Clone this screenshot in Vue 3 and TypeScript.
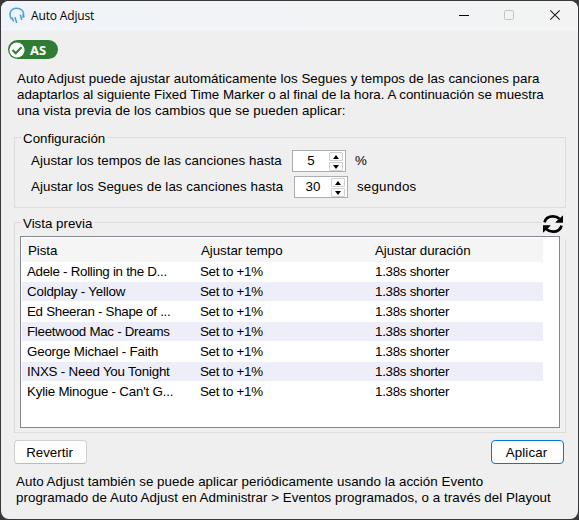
<script setup lang="ts">
import { ref } from 'vue';

interface TrackRow {
  track: string;
  tempo: string;
  duration: string;
  fit: string;
}

const tempoLimit = ref(5);
const segueLimit = ref(30);

const rows: TrackRow[] = [
  ['Adele - Rolling in the D...', 'tight'],
  ['Coldplay - Yellow', 'snug'],
  ['Ed Sheeran - Shape of ...', 'tight'],
  ['Fleetwood Mac - Dreams', 'tight'],
  ['George Michael - Faith', 'snug'],
  ['INXS - Need You Tonight', 'snug'],
  ["Kylie Minogue - Can't G...", 'snug'],
].map(([track, fit]) => ({ track, fit, tempo: 'Set to +1%', duration: '1.38s shorter' }));
</script>

<template>
  <div class="desktop">
    <main class="window">
      <header class="titlebar">
        <svg class="app-icon" width="16" height="17" viewBox="0 0 16 17">
          <path
            d="M2.6 12.3C-.2 8.500.6 1.300 7.600 1.200c6.200 0 8.200 5.200 6.200 9.300"
            fill="none"
            stroke="#4ba3dc"
            stroke-width="1.6"
          />
          <path
            d="M3 10.500l1.600 4M6 10.300l1.700 5.800M11.300 7.800l1.500 5.200M13.800 7.300l1.200 3.200"
            fill="none"
            stroke="#4ba3dc"
            stroke-width="1.6"
          />
        </svg>
        <span class="title">Auto Adjust</span>
        <svg class="controls" width="102" height="12" viewBox="0 0 102 12">
          <path d="M0 6.5h10" stroke="#000" />
          <rect x="45.5" y="1.5" width="9" height="9" rx="1" fill="none" stroke="#c3c3c3" />
          <path d="M91.3 1.3l9.4 9.4M100.7 1.3l-9.4 9.4" stroke="#1a1a1a" stroke-width="1.1" />
        </svg>
      </header>

      <div class="badge">
        <svg width="16" height="16" viewBox="0 0 16 16">
          <circle cx="8" cy="8" r="7.6" fill="#fff" />
          <path d="M3.5 8l3.2 3.2 5.8-6" fill="none" stroke="#2e7d32" stroke-width="2" />
        </svg>
        <b>AS</b>
      </div>

      <p class="intro">
        <span class="i1">Auto Adjust puede ajustar automáticamente los Segues y tempos de las canciones para</span>
        <span class="i2">adaptarlos al siguiente Fixed Time Marker o al final de la hora. A continuación se muestra</span>
        <span class="i3">una vista previa de los cambios que se pueden aplicar:</span>
      </p>

      <fieldset class="config">
        <legend>Configuración</legend>
        <div class="setting">
          <label>Ajustar los tempos de las canciones hasta</label>
          <div class="spinner">
            <span>{{ tempoLimit }}</span>
            <div class="arrows">
              <button class="up" @click="tempoLimit++"></button>
              <button class="down" @click="tempoLimit--"></button>
            </div>
          </div>
          <span>%</span>
        </div>
        <div class="setting second">
          <label>Ajustar los Segues de las canciones hasta</label>
          <div class="spinner">
            <span>{{ segueLimit }}</span>
            <div class="arrows">
              <button class="up" @click="segueLimit++"></button>
              <button class="down" @click="segueLimit--"></button>
            </div>
          </div>
          <span class="unit">segundos</span>
        </div>
      </fieldset>

      <fieldset class="preview">
        <legend>Vista previa</legend>
        <div class="refresh">
          <svg width="20" height="20" viewBox="0 0 20 20">
            <path
              d="M1.5 8.4C2.5 4 6 2.3 10 2.3c2.8 0 4.8.8 6.400 2.400M18.500 11.600c-1 4.400-4.500 6.100-8.500 6.100-2.800 0-4.800-.8-6.400-2.400"
              fill="none"
              stroke="#000"
              stroke-width="2.7"
            />
            <path d="M20 1.500v7h-7.300zM0 18.500v-7h7.300z" />
            <path d="M20 1.500v7h-7.800zM0 18.500v-7h7.800z" />
          </svg>
        </div>
        <div class="list">
          <div class="row head">
            <span>Pista</span>
            <span>Ajustar tempo</span>
            <span>Ajustar duración</span>
          </div>
          <div v-for="row in rows" :key="row.track" class="row">
            <span :class="row.fit">{{ row.track }}</span>
            <span class="tight">{{ row.tempo }}</span>
            <span class="tight">{{ row.duration }}</span>
          </div>
        </div>
      </fieldset>

      <div class="actions">
        <button class="btn">Revertir</button>
        <button class="btn primary">Aplicar</button>
      </div>

      <p class="footer">
        <span class="f1">Auto Adjust también se puede aplicar periódicamente usando la acción Evento</span>
        <span class="f2">programado de Auto Adjust en Administrar &gt; Eventos programados, o a través del Playout</span>
      </p>
    </main>
  </div>
</template>

<style>
body {
  background: #2d2c2e;
}
</style>

<style scoped>
.desktop {
  width: 579px;
  height: 520px;
  box-sizing: border-box;
  padding: 1px;
  background: #38373a;
  overflow: hidden;
}

.window {
  height: 518px;
  border-radius: 8px;
  background: #efefef;
  overflow: hidden;
  font: 13.33px/16px 'Liberation Sans', Arial, sans-serif;
  color: #000;
  white-space: nowrap;
}

.titlebar {
  display: flex;
  align-items: center;
  height: 30px;
  box-sizing: border-box;
  padding: 0 17px 2px 8px;
  background: linear-gradient(to right, #f0f3f9, #f3f3f3);
}

.title {
  margin-left: 6px;
  font: 12px/16px 'Open Sans', sans-serif;
  letter-spacing: -0.15px;
  margin-top: 1px;
}

.controls {
  margin-left: auto;
}

.badge {
  display: flex;
  align-items: center;
  width: 50px;
  height: 19px;
  box-sizing: border-box;
  margin: 9px 0 0 7px;
  padding-left: 1px;
  border-radius: 10px;
  background: #2e7d32;
  color: #fff;
}

.badge b {
  margin-left: 5px;
  font-family: 'Noto Sans', sans-serif;
  font-size: 13px;
}

p {
  margin: 0;
}

p span {
  display: block;
}

.intro {
  padding: 12px 0 0 16px;
}

.i1,
.f1,
.f2,
label {
  letter-spacing: 0.046px;
}

.i3 {
  letter-spacing: 0.075px;
}

fieldset {
  position: relative;
  width: 552px;
  box-sizing: border-box;
  margin: 0 0 0 13px;
  padding: 0;
  border: 1px solid #dcdcdc;
}

legend {
  margin-left: 6px;
  padding: 0 2px;
  height: 15px;
  line-height: 17px;
}

.config {
  height: 78px;
  margin-top: 11px;
}

.setting {
  display: flex;
  align-items: center;
  height: 22px;
  margin: 5px 0 0 16px;
}

.setting.second {
  margin-top: 4px;
}

.setting label {
  width: 261px;
}

.setting.second label {
  width: 263px;
}

.spinner {
  display: flex;
  width: 54px;
  height: 22px;
  box-sizing: border-box;
  margin-right: 9px;
  border: 1px solid #abadb3;
  background: #fff;
}

.spinner > span {
  width: 36px;
  line-height: 20px;
  text-align: center;
}

.unit {
  letter-spacing: 0.2px;
}

.arrows {
  display: flex;
  flex-direction: column;
  gap: 1px;
  width: 15px;
  height: 19px;
  padding-top: 1px;
}

.arrows button {
  display: flex;
  align-items: center;
  justify-content: center;
  width: 14px;
  height: 9px;
  box-sizing: border-box;
  padding: 0;
  border: 1px solid #d0d0d0;
  border-radius: 1px;
  background: #fdfdfd;
}

.arrows button::before {
  content: '';
  border: 3px solid transparent;
}

.arrows .up::before {
  border-top: 0;
  border-bottom: 4px solid #000;
}

.arrows .down::before {
  border-bottom: 0;
  border-top: 4px solid #000;
}

.preview {
  height: 218px;
  margin-top: 7px;
}

/* sits on the corner of the group frame and hides it */
.refresh {
  position: absolute;
  top: -16px;
  right: -1px;
  width: 24px;
  height: 25px;
  background: #efefef;
}

.refresh svg {
  display: block;
  margin-left: 1px;
}

.list {
  position: relative;
  width: 540px;
  height: 192px;
  box-sizing: border-box;
  margin: 6px 0 0 5px;
  padding: 1px;
  border: 1px solid #828790;
  background: #fff;
}

.row {
  display: grid;
  grid-template-columns: 173px 175px 1fr;
  width: 521px;
  height: 20px;
  box-sizing: border-box;
  padding-left: 5px;
  line-height: 19px;
}

.row:nth-child(odd) {
  background: linear-gradient(#eeeef9, #eeeef9) 0 0 / 100% 19px no-repeat;
}

.row.head {
  grid-template-columns: 173px 174px 1fr;
  height: 24px;
  padding-left: 6px;
  line-height: 25px;
  letter-spacing: -0.05px;
  background: #f5f5f5;
}

.tight {
  letter-spacing: -0.28px;
}

.snug {
  letter-spacing: -0.2px;
}

.actions {
  display: flex;
  justify-content: space-between;
  margin: 7px 14px 0 13px;
}

.btn {
  width: 73px;
  height: 24px;
  box-sizing: border-box;
  padding: 2px 2px 0 0;
  border: 1px solid #d0d0d0;
  border-bottom-color: #bcbcbc;
  border-radius: 4px;
  background: #fdfdfd;
  color: #000;
  font: inherit;
}

.btn.primary {
  border-color: #0078d4;
  letter-spacing: 0.1px;
}

.footer {
  padding: 10px 0 0 15px;
}
</style>
